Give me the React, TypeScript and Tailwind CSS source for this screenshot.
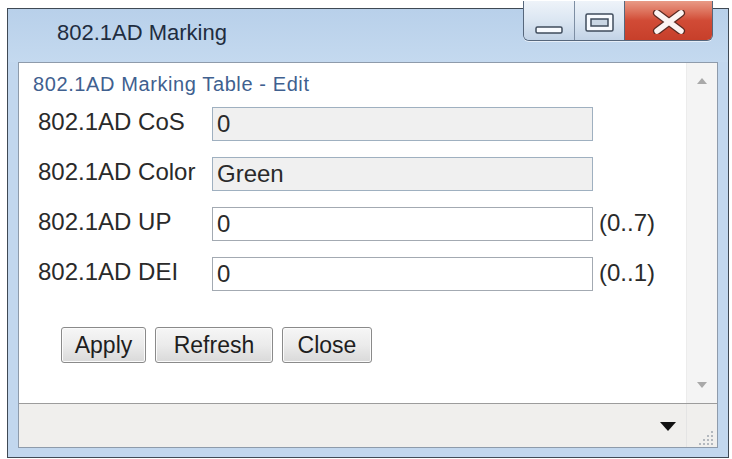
import React from "react";

const rows = [
  { label: "802.1AD CoS", value: "0", disabled: true, range: "" },
  { label: "802.1AD Color", value: "Green", disabled: true, range: "" },
  { label: "802.1AD UP", value: "0", disabled: false, range: "(0..7)" },
  { label: "802.1AD DEI", value: "0", disabled: false, range: "(0..1)" },
];

const CaptionButtons = () => (
  <div className="absolute top-[-8px] right-[15px] flex h-[40px] rounded-b-[6px] border border-t-0 border-[#56677c] overflow-hidden shadow-[0_1px_0_#e6eef8]">
    {/* minimize */}
    <div className="w-[51px] h-full flex items-end justify-center pb-[6px] bg-gradient-to-b from-[#eef3f9] via-[#dbe6f2] to-[#c2d3e6] border-r border-[#7d8ea3]">
      <svg width="28" height="8" viewBox="0 0 28 8">
        <rect x="1" y="1" width="26" height="6" rx="1.5" fill="#f8fbff" stroke="#3f4c5c" strokeWidth="1.5" />
      </svg>
    </div>
    {/* maximize */}
    <div className="w-[50px] h-full flex items-center justify-center pt-[4px] bg-gradient-to-b from-[#eef3f9] via-[#dbe6f2] to-[#c2d3e6] border-r border-[#56677c]">
      <svg width="29" height="19" viewBox="0 0 29 19">
        <rect x="1" y="1" width="27" height="17" rx="1.5" fill="#f8fbff" stroke="#3f4c5c" strokeWidth="1.5" />
        <rect x="6" y="6" width="17" height="7" fill="#c9d6e4" stroke="#3f4c5c" strokeWidth="1.5" />
      </svg>
    </div>
    {/* close */}
    <div className="w-[87px] h-full flex items-center justify-center pt-[2px] bg-gradient-to-b from-[#e89a86] via-[#d14b36] to-[#c73f2a]">
      <svg width="34" height="24" viewBox="0 0 34 24">
        <path d="M5 3 L29 21 M29 3 L5 21" stroke="#5a2a22" strokeWidth="8" strokeLinecap="round" />
        <path d="M5 3 L29 21 M29 3 L5 21" stroke="#fbf4f2" strokeWidth="5.5" strokeLinecap="round" />
      </svg>
    </div>
  </div>
);

const ResizeGrip = () => (
  <svg width="16" height="16" viewBox="0 0 16 16">
    {[
      [12, 2],
      [8, 6],
      [12, 6],
      [4, 10],
      [8, 10],
      [12, 10],
      [0, 14],
      [4, 14],
      [8, 14],
      [12, 14],
    ].map(([x, y], i) => (
      <rect key={i} x={x} y={y} width="2" height="2" fill="#b3b8be" />
    ))}
  </svg>
);

export default function App() {
  return (
    <div className="w-[732px] h-[459px] bg-white pl-[7px] pt-[8px] font-['Liberation_Sans',Arial,sans-serif]">
      <div className="relative w-[722px] h-[450px] border border-[#3f4954] bg-[#c2d7ee] flex flex-col">
        {/* title bar */}
        <div className="h-[53px] flex items-start bg-gradient-to-b from-[#b8d0ea] to-[#c4d9ef]">
          <span className="ml-[49px] mt-[11px] text-[22px] leading-[26px] text-[#1f2d40]">802.1AD Marking</span>
        </div>
        <CaptionButtons />

        {/* client panel */}
        <div className="mx-[10px] w-[700px] h-[386px] border border-[#8e9bab] bg-white flex flex-col">
          <div className="h-[340px] flex">
            <div className="flex-1 flex flex-col">
              <div className="pl-[14px] pt-[10px] text-[20px] leading-[22px] tracking-[0.6px] text-[#40608f]">
                802.1AD Marking Table - Edit
              </div>
              <div className="mt-[12px] pl-[19px] flex flex-col gap-[16px]">
                {rows.map((r) => (
                  <div key={r.label} className="flex items-center h-[34px]">
                    <span className="w-[174px] pb-[4px] text-[24px] leading-[28px] text-[#2a2a2a]">{r.label}</span>
                    <input
                      readOnly
                      value={r.value}
                      className={`w-[381px] h-[34px] pl-[4px] text-[24px] text-[#2a2a2a] outline-none border ${
                        r.disabled ? "bg-[#f0f0f0] border-[#9fb0c0]" : "bg-white border-[#a3aab2]"
                      }`}
                    />
                    {r.range && <span className="ml-[6px] pb-[2px] text-[24px] text-[#2a2a2a]">{r.range}</span>}
                  </div>
                ))}
              </div>
              <div className="mt-[36px] ml-[42px] flex gap-[9px]">
                {[
                  ["Apply", "w-[85px]"],
                  ["Refresh", "w-[118px]"],
                  ["Close", "w-[90px]"],
                ].map(([t, w]) => (
                  <button
                    key={t}
                    className={`${w} h-[36px] rounded-[3px] border border-[#8a8a8a] bg-gradient-to-b from-[#f6f6f6] via-[#ebebeb] to-[#d9d9d9] text-[23px] leading-[26px] text-[#1e1e1e] shadow-[inset_0_0_0_1px_#fbfbfb]`}
                  >
                    {t}
                  </button>
                ))}
              </div>
            </div>
            {/* scrollbar */}
            <div className="w-[31px] bg-[#f4f4f4] border-l border-[#ececec] flex flex-col items-center justify-between py-[15px]">
              <svg width="10" height="6" viewBox="0 0 10 6">
                <path d="M0 6 L5 0 L10 6 Z" fill="#a9a9a9" />
              </svg>
              <svg width="10" height="6" viewBox="0 0 10 6">
                <path d="M0 0 L10 0 L5 6 Z" fill="#a9a9a9" />
              </svg>
            </div>
          </div>
          {/* status bar */}
          <div className="h-[44px] flex border-t border-[#9c9c9c] bg-[#f0efed]">
            <div className="flex-1 flex items-center justify-end pr-[10px] pt-[2px]">
              <svg width="16" height="9" viewBox="0 0 16 9">
                <path d="M0 0 L16 0 L8 9 Z" fill="#111" />
              </svg>
            </div>
            <div className="w-[31px] border-l border-[#e4e4e4] flex items-end justify-end pr-[2px] pb-[2px]">
              <ResizeGrip />
            </div>
          </div>
        </div>
      </div>
    </div>
  );
}
